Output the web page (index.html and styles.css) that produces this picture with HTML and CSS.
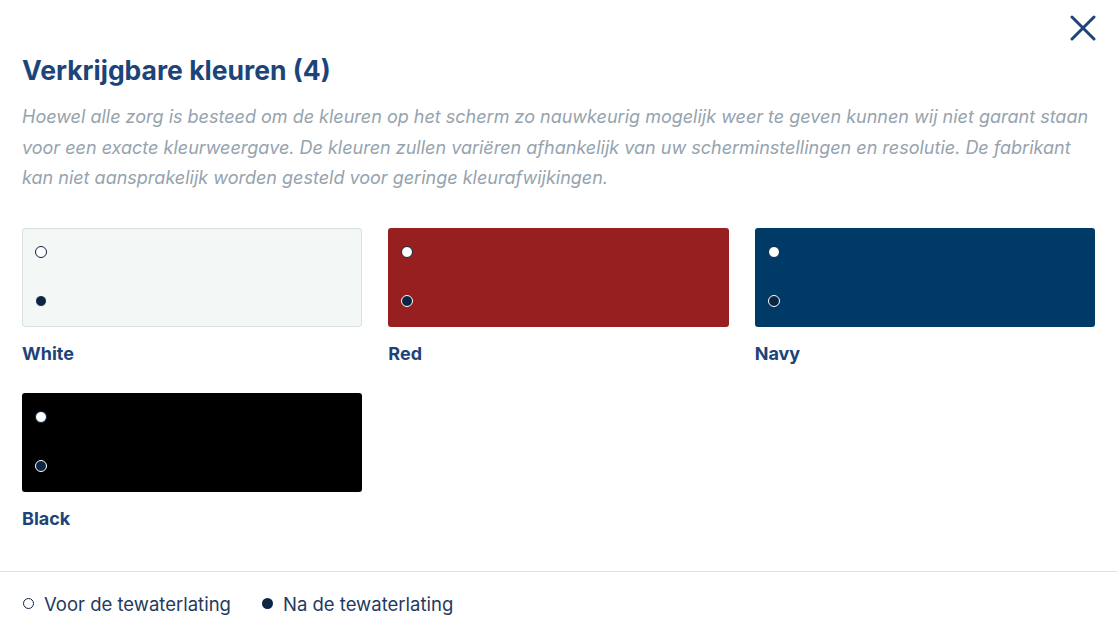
FILE: index.html
```html
<!DOCTYPE html>
<html>
  <head>
    <meta charset="utf-8" />
    <title>Verkrijgbare kleuren</title>
    <link rel="stylesheet" href="styles.css">
  </head>
  <body>
    <div class="modal">
      <div class="modal-top">
        <button class="close" aria-label="Sluiten">
          <svg width="26" height="26" viewBox="0 0 26 26">
            <path d="M2 2 L24 24 M24 2 L2 24" stroke="#1d4479" stroke-width="3" stroke-linecap="round" fill="none" />
          </svg>
        </button>
      </div>
      <div class="content">
        <h2 class="title">Verkrijgbare kleuren (4)</h2>
        <p class="intro">
          Hoewel alle zorg is besteed om de kleuren op het scherm zo nauwkeurig mogelijk weer te geven kunnen wij niet garant staan
          voor een exacte kleurweergave. De kleuren zullen variëren afhankelijk van uw scherminstellingen en resolutie. De fabrikant
          kan niet aansprakelijk worden gesteld voor geringe kleurafwijkingen.
        </p>
        <div class="colors">
          <div class="color">
            <div class="swatch white">
              <span class="dot before"></span>
              <span class="dot after"></span>
            </div>
            <span class="color-name">White</span>
          </div>
          <div class="color">
            <div class="swatch red">
              <span class="dot before"></span>
              <span class="dot after"></span>
            </div>
            <span class="color-name">Red</span>
          </div>
          <div class="color">
            <div class="swatch navy">
              <span class="dot before"></span>
              <span class="dot after"></span>
            </div>
            <span class="color-name">Navy</span>
          </div>
          <div class="color">
            <div class="swatch black">
              <span class="dot before"></span>
              <span class="dot after"></span>
            </div>
            <span class="color-name">Black</span>
          </div>
        </div>
      </div>
      <div class="legend">
        <div class="legend-item">
          <span class="legend-dot before"></span>
          <span>Voor de tewaterlating</span>
        </div>
        <div class="legend-item">
          <span class="legend-dot after"></span>
          <span>Na de tewaterlating</span>
        </div>
      </div>
    </div>
  </body>
</html>
```
FILE: styles.css
```css
* {
  margin: 0;
  padding: 0;
  box-sizing: border-box;
}
html,
body {
  width: 100%;
  height: 100%;
  background: #fff;
}
body {
  font-family: Inter, "Noto Sans", sans-serif;
  color: #1d4479;
}
.modal {
  width: 100%;
}
.modal-top {
  display: flex;
  justify-content: flex-end;
  padding: 15px 21px 0 0;
  height: 54px;
}
.close {
  border: 0;
  background: none;
  width: 26px;
  height: 26px;
  cursor: pointer;
}
.content {
  padding: 0 22px 41px 22px;
}
.title {
  font-size: 26.5px;
  font-weight: 700;
  line-height: 32px;
  color: #1d4479;
}
.intro {
  margin-top: 16px;
  font-size: 18px;
  font-style: italic;
  line-height: 30.5px;
  color: #95a3ae;
}
.colors {
  margin-top: 34px;
  display: grid;
  grid-template-columns: repeat(3, 1fr);
  column-gap: 26px;
  row-gap: 28px;
}
.color {
  display: flex;
  flex-direction: column;
}
.swatch {
  height: 99px;
  border-radius: 3px;
  border: 1px solid transparent;
  padding: 17px 0 0 12px;
  display: flex;
  flex-direction: column;
  gap: 37px;
}
.swatch.white {
  background: #f3f8f6;
  border-color: #d9e1e3;
}
.swatch.red {
  background: #981f1f;
}
.swatch.navy {
  background: #003a66;
}
.swatch.black {
  background: #000;
}
.dot {
  width: 12px;
  height: 12px;
  border-radius: 50%;
}
.dot.before {
  background: #fff;
  border: 1px solid #0b2542;
}
.dot.after {
  background: #0b2542;
  border: 1px solid #fff;
}
.color-name {
  margin-top: 16px;
  font-size: 18px;
  font-weight: 700;
  line-height: 22px;
}
.legend {
  border-top: 1px solid #e1e4e6;
  padding: 20px 22px;
  display: flex;
  gap: 30px;
}
.legend-item {
  display: flex;
  align-items: center;
  gap: 10px;
  font-size: 18.5px;
  line-height: 24px;
  color: #1f3a60;
}
.legend-dot {
  width: 11px;
  height: 11px;
  border-radius: 50%;
  margin-left: 1px;
}
.legend-dot.before {
  border: 1px solid #0b2542;
}
.legend-dot.after {
  background: #0b2542;
}
```
